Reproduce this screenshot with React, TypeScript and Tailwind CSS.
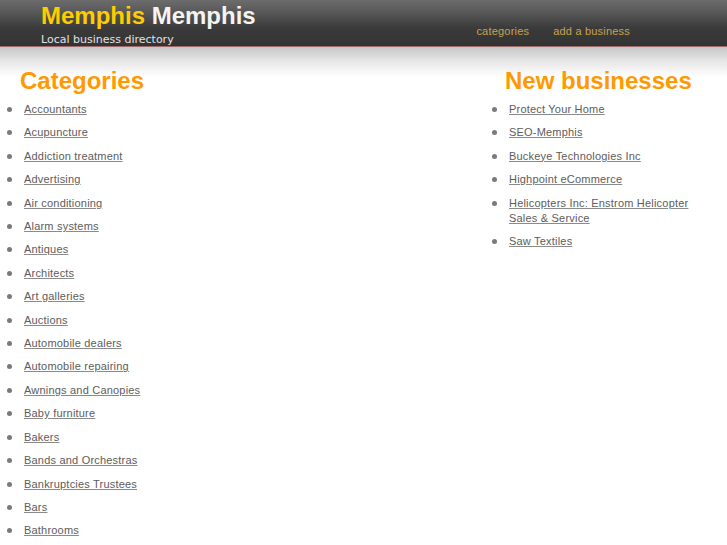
const categories = [
  "Accountants",
  "Acupuncture",
  "Addiction treatment",
  "Advertising",
  "Air conditioning",
  "Alarm systems",
  "Antiques",
  "Architects",
  "Art galleries",
  "Auctions",
  "Automobile dealers",
  "Automobile repairing",
  "Awnings and Canopies",
  "Baby furniture",
  "Bakers",
  "Bands and Orchestras",
  "Bankruptcies Trustees",
  "Bars",
  "Bathrooms",
];

const newBusinesses = [
  "Protect Your Home",
  "SEO-Memphis",
  "Buckeye Technologies Inc",
  "Highpoint eCommerce",
  "Helicopters Inc: Enstrom Helicopter Sales & Service",
  "Saw Textiles",
];

function LinkList({ items }: { items: string[] }) {
  return (
    <ul className="mt-[9px] pl-[7px]">
      {items.map((item) => (
        <li key={item} className="mb-[8px] flex items-start leading-[15.4px]">
          <span className="mt-[5px] h-[5px] w-[5px] shrink-0 rounded-full bg-[#7a7a7a]" />
          <a href="#" className="ml-[12px] text-[#5c5c5c] underline decoration-[#8a8a8a]">
            {item}
          </a>
        </li>
      ))}
    </ul>
  );
}

export default function App() {
  return (
    <div className="min-h-[545px] bg-white font-['Liberation_Sans',Arial,sans-serif] text-[11px] tracking-[0.2px]">
      {/* top bar */}
      <header className="flex h-[47px] border-b border-[#9c6a6a] bg-[linear-gradient(#6c6c6c,#555_30%,#3b3b3b_60%,#333)]">
        <div className="pl-[41px] pt-[4px]">
          <h1 className="text-[24px] font-bold leading-none tracking-normal">
            <span className="text-[#ffcc00]">Memphis</span>{" "}
            <span className="text-[#f4f4f4]">Memphis</span>
          </h1>
          <p className="mt-[5px] font-['DejaVu_Sans',sans-serif] text-[11px] leading-[13px] tracking-normal text-[#e2e2e2]">
            Local business directory
          </p>
        </div>
        <nav className="ml-auto mr-[97px] flex gap-[24px] pt-[26px] leading-none text-[#c9a24f]">
          <a href="#">categories</a>
          <a href="#">add a business</a>
        </nav>
      </header>

      <main className="flex bg-[linear-gradient(#c6c6c6,#e6e6e6_14px,#fff_30px)] bg-no-repeat">
        <section className="flex-1">
          <h2 className="ml-[20px] mt-[22px] text-[24px] font-bold leading-none tracking-normal text-[#ff9900]">
            Categories
          </h2>
          <LinkList items={categories} />
        </section>
        <section className="mr-[20px] w-[222px]">
          <h2 className="ml-[20px] mt-[22px] text-[24px] font-bold leading-none tracking-normal text-[#ff9900]">
            New businesses
          </h2>
          <LinkList items={newBusinesses} />
        </section>
      </main>
    </div>
  );
}
